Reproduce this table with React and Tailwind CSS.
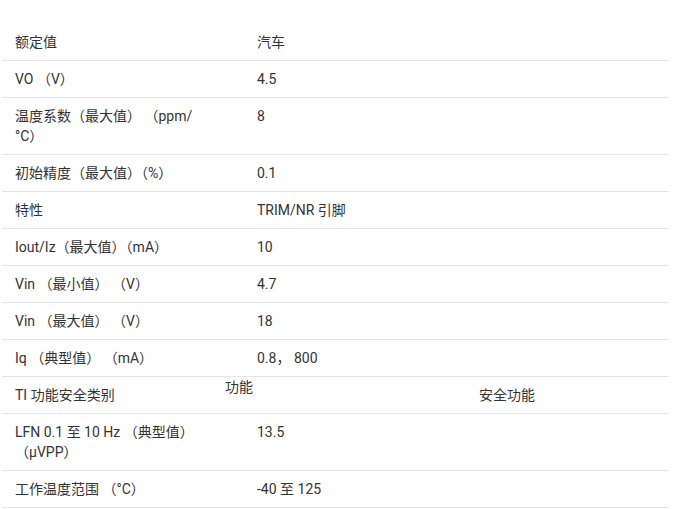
const rows = [
  { label: '额定值', value: '汽车' },
  { label: 'VO （V）', value: '4.5' },
  {
    label: (
      <>
        温度系数（最大值） （ppm/<wbr />°C）
      </>
    ),
    value: '8',
  },
  { label: '初始精度（最大值）（%）', value: '0.1' },
  { label: '特性', value: 'TRIM/NR 引脚' },
  { label: 'Iout/Iz（最大值）（mA）', value: '10' },
  { label: 'Vin （最小值） （V）', value: '4.7' },
  { label: 'Vin （最大值） （V）', value: '18' },
  { label: 'Iq （典型值） （mA）', value: '0.8， 800' },
  { label: 'TI 功能安全类别', special: true },
  { label: 'LFN 0.1 至 10 Hz （典型值） （µVPP）', value: '13.5' },
  { label: '工作温度范围 （°C）', value: '-40 至 125' },
]

function Row({ row }) {
  if (row.special) {
    // safety category row: nested header sits at the top of the cell
    return (
      <div className="flex border-b border-[#e6e6e6]">
        <div className="w-[223px] shrink-0 py-2 pl-[13px]">{row.label}</div>
        <div className="self-start">功能</div>
        <div className="flex-1 py-2 pl-[226px]">安全功能</div>
      </div>
    )
  }
  return (
    <div className="grid grid-cols-[230px_1fr] items-start border-b border-[#e6e6e6]">
      <div className="py-2 pl-[13px] pr-[27px]">{row.label}</div>
      <div className="py-2 pl-[25px]">{row.value}</div>
    </div>
  )
}

export default function App() {
  return (
    <div className="min-h-screen bg-white pt-[24px] font-['Roboto','Noto_Sans_CJK_SC',sans-serif] text-[14px] leading-5 text-[#333]">
      <div className="ml-[2px] w-[667px]">
        {rows.map((row, i) => (
          <Row key={i} row={row} />
        ))}
      </div>
    </div>
  )
}
